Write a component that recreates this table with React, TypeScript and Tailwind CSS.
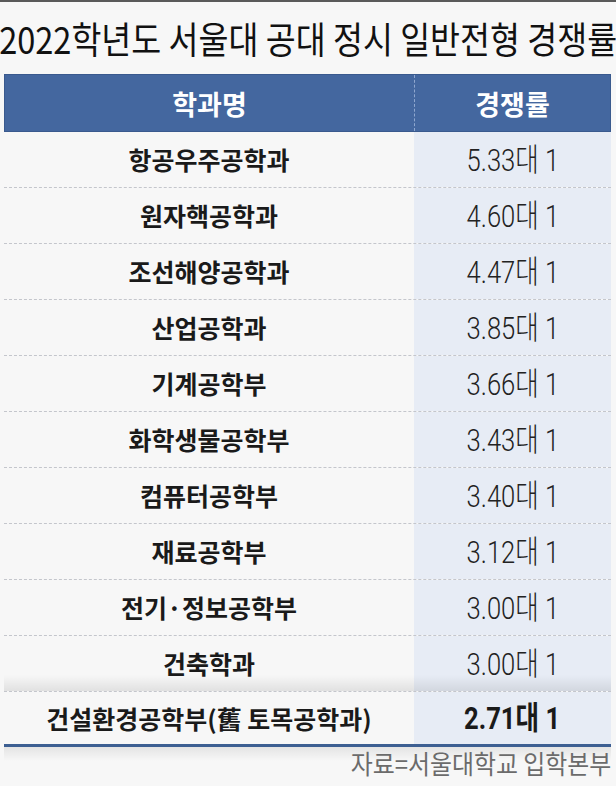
import React from "react";

const rows: [string, string][] = [
  ["항공우주공학과", "5.33대 1"],
  ["원자핵공학과", "4.60대 1"],
  ["조선해양공학과", "4.47대 1"],
  ["산업공학과", "3.85대 1"],
  ["기계공학부", "3.66대 1"],
  ["화학생물공학부", "3.43대 1"],
  ["컴퓨터공학부", "3.40대 1"],
  ["재료공학부", "3.12대 1"],
  ["전기·정보공학부", "3.00대 1"],
  ["건축학과", "3.00대 1"],
];

const KR = "font-['Noto_Sans_CJK_KR','Noto_Sans',sans-serif]";
const NUM = "font-['Roboto','Noto_Sans_CJK_KR',sans-serif]";

export default function App() {
  return (
    <div className={`w-[616px] h-[786px] bg-[#f7f7f7] border-t-2 border-[#5a5a5a] ${KR} overflow-hidden`}>
      <div className="h-[72px] flex items-center justify-center">
        <span className="inline-block text-[37px] leading-none text-[#111] scale-x-[0.88] whitespace-nowrap">
          2022학년도 서울대 공대 정시 일반전형 경쟁률
        </span>
      </div>
      <div className="ml-[4px] w-[607px]">
        <div className="h-[58px] flex bg-[#44679f] border border-[#3a5a8e]">
          <div className="w-[409px] flex items-center justify-center text-white text-[27px] font-bold leading-none">
            학과명
          </div>
          <div className="flex-1 flex items-center justify-center text-white text-[27px] font-bold leading-none border-l border-dashed border-[#8fa7cf]">
            경쟁률
          </div>
        </div>
        {rows.map(([name, rate], i) => (
          <div
            key={name}
            className="relative h-[56px] flex border-b border-dashed border-[#c4c6cc]"
          >
            <div className="w-[410px] flex items-center justify-center text-[25px] font-bold text-[#1a1a1a] leading-none">
              {name}
            </div>
            <div className="flex-1 flex items-center justify-center bg-[#e7ecf5]">
              <span className={`inline-block ${NUM} text-[32px] font-light text-[#222] leading-none scale-x-[0.8] whitespace-nowrap`}>
                {rate}
              </span>
            </div>
            {i === rows.length - 1 && (
              <div className="absolute left-0 right-0 bottom-0 h-[16px] bg-gradient-to-b from-transparent to-[rgba(0,0,0,0.09)]" />
            )}
          </div>
        ))}
        <div className="h-[55px] flex border-b-[3px] border-[#3d5f92]">
          <div className="w-[410px] flex items-center justify-center text-[25px] font-bold text-[#1a1a1a] leading-none whitespace-nowrap">
            건설환경공학부(舊 토목공학과)
          </div>
          <div className="flex-1 flex items-center justify-center bg-[#e7ecf5]">
            <span className={`inline-block ${NUM} text-[32px] font-bold text-[#1a1a1a] leading-none scale-x-[0.8] whitespace-nowrap`}>
              2.71대 1
            </span>
          </div>
        </div>
        <div className="relative h-[32px] flex items-center justify-end">
          <div className="absolute left-0 right-0 top-0 h-[14px] bg-gradient-to-b from-[rgba(0,0,0,0.08)] to-transparent" />
          <span className="inline-block text-[26px] text-[#6b6b6b] leading-none origin-right scale-x-[0.92] whitespace-nowrap">
            자료=서울대학교 입학본부
          </span>
        </div>
      </div>
    </div>
  );
}
